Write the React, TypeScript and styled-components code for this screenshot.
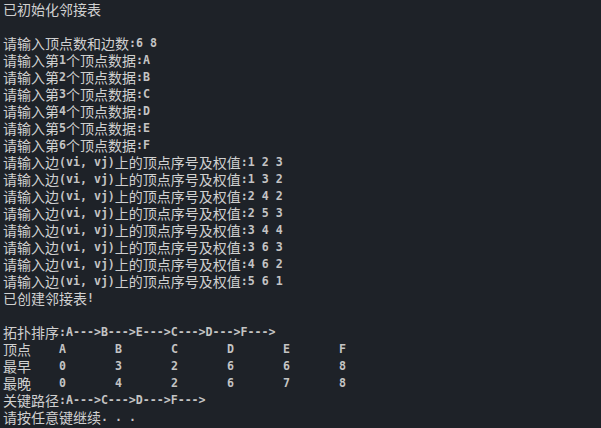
import React from "react";
import styled, { createGlobalStyle } from "styled-components";

const Global = createGlobalStyle`
  html, body { margin: 0; padding: 0; background: #1e2228; }
  #root { min-height: 428px; }
`;

const Console = styled.div`
  box-sizing: border-box;
  width: 601px;
  height: 428px;
  overflow: hidden;
  background: #1e2228;
  color: #cccccc;
  padding: 1px 0 0 3px;
  font-family: "DejaVu Sans Mono", "Liberation Mono", monospace;
  font-size: 11.667px;
`;

const Line = styled.div`
  height: 17px;
  line-height: 17px;
  white-space: pre;
  display: flex;
  align-items: center;
`;

const Han = styled.span`
  display: inline-block;
  height: 17px;
  font-family: "Noto Sans CJK SC", "Noto Sans CJK JP", sans-serif;
  font-size: 14px;
  line-height: 17px;
  color: #d0d0d0;
`;

const Latin = styled.span`
  display: inline-block;
  height: 17px;
  font-family: "DejaVu Sans Mono", "Liberation Mono", monospace;
  font-size: 11.6px;
  font-weight: bold;
  line-height: 17px;
  color: #c4c4c4;
  white-space: pre;
`;

const Row = styled.div`
  display: grid;
  grid-template-columns: repeat(7, 56px);
  height: 17px;
  line-height: 17px;
  align-items: center;
`;

const Cell = styled.div`
  display: flex;
  align-items: center;
  height: 17px;
`;

const isHan = (ch: string) => /[\u3000-\u9fff\uff00-\uffef]/.test(ch);

function Text({ s }: { s: string }) {
  const parts: { han: boolean; t: string }[] = [];
  for (const ch of s) {
    const h = isHan(ch);
    const last = parts[parts.length - 1];
    if (last && last.han === h) last.t += ch;
    else parts.push({ han: h, t: ch });
  }
  return (
    <>
      {parts.map((p, i) =>
        p.han ? <Han key={i}>{p.t}</Han> : <Latin key={i}>{p.t}</Latin>
      )}
    </>
  );
}

const lines: string[] = [
  "已初始化邻接表",
  "",
  "请输入顶点数和边数:6 8",
  "请输入第1个顶点数据:A",
  "请输入第2个顶点数据:B",
  "请输入第3个顶点数据:C",
  "请输入第4个顶点数据:D",
  "请输入第5个顶点数据:E",
  "请输入第6个顶点数据:F",
  "请输入边(vi, vj)上的顶点序号及权值:1 2 3",
  "请输入边(vi, vj)上的顶点序号及权值:1 3 2",
  "请输入边(vi, vj)上的顶点序号及权值:2 4 2",
  "请输入边(vi, vj)上的顶点序号及权值:2 5 3",
  "请输入边(vi, vj)上的顶点序号及权值:3 4 4",
  "请输入边(vi, vj)上的顶点序号及权值:3 6 3",
  "请输入边(vi, vj)上的顶点序号及权值:4 6 2",
  "请输入边(vi, vj)上的顶点序号及权值:5 6 1",
  "已创建邻接表!",
  "",
  "拓扑排序:A--->B--->E--->C--->D--->F--->",
];

const table: string[][] = [
  ["顶点", "A", "B", "C", "D", "E", "F"],
  ["最早", "0", "3", "2", "6", "6", "8"],
  ["最晚", "0", "4", "2", "6", "7", "8"],
];

const tail = ["关键路径:A--->C--->D--->F--->", "请按任意键继续. . ."];

export default function App() {
  return (
    <>
      <Global />
      <Console>
        {lines.map((l, i) => (
          <Line key={i}>
            <Text s={l} />
          </Line>
        ))}
        {table.map((r, i) => (
          <Row key={"r" + i}>
            {r.map((c, j) => (
              <Cell key={j}>
                <Text s={c} />
              </Cell>
            ))}
          </Row>
        ))}
        {tail.map((l, i) => (
          <Line key={"t" + i}>
            <Text s={l} />
          </Line>
        ))}
      </Console>
    </>
  );
}
